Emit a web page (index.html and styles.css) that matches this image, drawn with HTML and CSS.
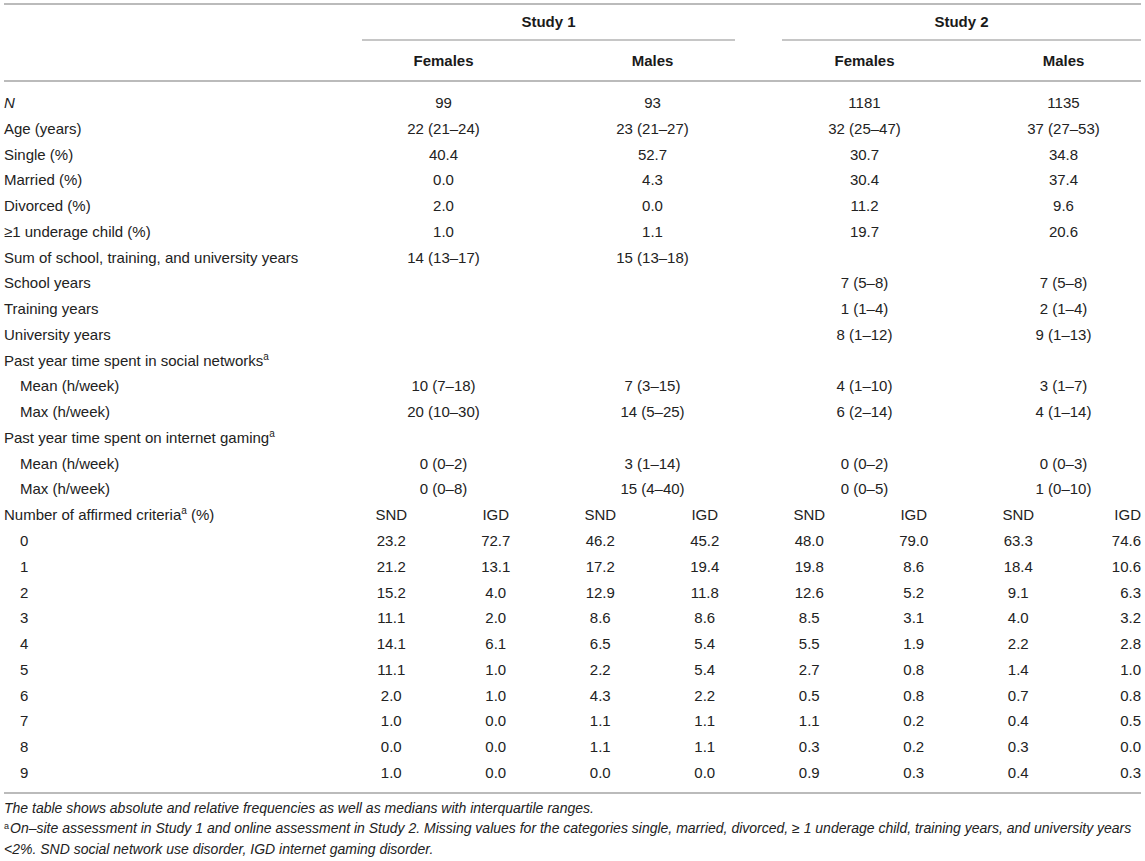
FILE: index.html
```html
<!DOCTYPE html>
<html lang="en">
<head>
<meta charset="utf-8">
<title>Sample characteristics</title>
<link rel="stylesheet" href="styles.css">
</head>
<body>
<div class="wrap">
<table class="stats">
  <colgroup>
    <col class="c-label">
    <col class="c-sub"><col class="c-sub"><col class="c-sub"><col class="c-sub">
    <col class="c-sub"><col class="c-sub"><col class="c-sub"><col class="c-last">
  </colgroup>
  <thead>
    <tr class="h-study">
      <th></th>
      <th colspan="4"><div class="study s1">Study 1</div></th>
      <th colspan="4"><div class="study s2">Study 2</div></th>
    </tr>
    <tr class="h-sex">
      <th></th>
      <th colspan="2">Females</th>
      <th colspan="2">Males</th>
      <th colspan="2" class="p3">Females</th>
      <th colspan="2" class="p4">Males</th>
    </tr>
  </thead>
  <tbody>
    <tr class="first"><td class="lbl"><i>N</i></td><td colspan="2">99</td><td colspan="2">93</td><td colspan="2" class="p3">1181</td><td colspan="2" class="p4">1135</td></tr>
    <tr><td class="lbl">Age (years)</td><td colspan="2">22 (21–24)</td><td colspan="2">23 (21–27)</td><td colspan="2" class="p3">32 (25–47)</td><td colspan="2" class="p4">37 (27–53)</td></tr>
    <tr><td class="lbl">Single (%)</td><td colspan="2">40.4</td><td colspan="2">52.7</td><td colspan="2" class="p3">30.7</td><td colspan="2" class="p4">34.8</td></tr>
    <tr><td class="lbl">Married (%)</td><td colspan="2">0.0</td><td colspan="2">4.3</td><td colspan="2" class="p3">30.4</td><td colspan="2" class="p4">37.4</td></tr>
    <tr><td class="lbl">Divorced (%)</td><td colspan="2">2.0</td><td colspan="2">0.0</td><td colspan="2" class="p3">11.2</td><td colspan="2" class="p4">9.6</td></tr>
    <tr><td class="lbl">≥1 underage child (%)</td><td colspan="2">1.0</td><td colspan="2">1.1</td><td colspan="2" class="p3">19.7</td><td colspan="2" class="p4">20.6</td></tr>
    <tr><td class="lbl">Sum of school, training, and university years</td><td colspan="2">14 (13–17)</td><td colspan="2">15 (13–18)</td><td colspan="2" class="p3"></td><td colspan="2" class="p4"></td></tr>
    <tr><td class="lbl">School years</td><td colspan="2"></td><td colspan="2"></td><td colspan="2" class="p3">7 (5–8)</td><td colspan="2" class="p4">7 (5–8)</td></tr>
    <tr><td class="lbl">Training years</td><td colspan="2"></td><td colspan="2"></td><td colspan="2" class="p3">1 (1–4)</td><td colspan="2" class="p4">2 (1–4)</td></tr>
    <tr><td class="lbl">University years</td><td colspan="2"></td><td colspan="2"></td><td colspan="2" class="p3">8 (1–12)</td><td colspan="2" class="p4">9 (1–13)</td></tr>
    <tr><td class="lbl" colspan="9">Past year time spent in social networks<sup>a</sup></td></tr>
    <tr><td class="lbl ind">Mean (h/week)</td><td colspan="2">10 (7–18)</td><td colspan="2">7 (3–15)</td><td colspan="2" class="p3">4 (1–10)</td><td colspan="2" class="p4">3 (1–7)</td></tr>
    <tr><td class="lbl ind">Max (h/week)</td><td colspan="2">20 (10–30)</td><td colspan="2">14 (5–25)</td><td colspan="2" class="p3">6 (2–14)</td><td colspan="2" class="p4">4 (1–14)</td></tr>
    <tr><td class="lbl" colspan="9">Past year time spent on internet gaming<sup>a</sup></td></tr>
    <tr><td class="lbl ind">Mean (h/week)</td><td colspan="2">0 (0–2)</td><td colspan="2">3 (1–14)</td><td colspan="2" class="p3">0 (0–2)</td><td colspan="2" class="p4">0 (0–3)</td></tr>
    <tr><td class="lbl ind">Max (h/week)</td><td colspan="2">0 (0–8)</td><td colspan="2">15 (4–40)</td><td colspan="2" class="p3">0 (0–5)</td><td colspan="2" class="p4">1 (0–10)</td></tr>
    <tr><td class="lbl">Number of affirmed criteria<sup>a</sup> (%)</td><td>SND</td><td>IGD</td><td>SND</td><td>IGD</td><td>SND</td><td>IGD</td><td>SND</td><td class="r">IGD</td></tr>
    <tr><td class="lbl ind">0</td><td>23.2</td><td>72.7</td><td>46.2</td><td>45.2</td><td>48.0</td><td>79.0</td><td>63.3</td><td class="r">74.6</td></tr>
    <tr><td class="lbl ind">1</td><td>21.2</td><td>13.1</td><td>17.2</td><td>19.4</td><td>19.8</td><td>8.6</td><td>18.4</td><td class="r">10.6</td></tr>
    <tr><td class="lbl ind">2</td><td>15.2</td><td>4.0</td><td>12.9</td><td>11.8</td><td>12.6</td><td>5.2</td><td>9.1</td><td class="r">6.3</td></tr>
    <tr><td class="lbl ind">3</td><td>11.1</td><td>2.0</td><td>8.6</td><td>8.6</td><td>8.5</td><td>3.1</td><td>4.0</td><td class="r">3.2</td></tr>
    <tr><td class="lbl ind">4</td><td>14.1</td><td>6.1</td><td>6.5</td><td>5.4</td><td>5.5</td><td>1.9</td><td>2.2</td><td class="r">2.8</td></tr>
    <tr><td class="lbl ind">5</td><td>11.1</td><td>1.0</td><td>2.2</td><td>5.4</td><td>2.7</td><td>0.8</td><td>1.4</td><td class="r">1.0</td></tr>
    <tr><td class="lbl ind">6</td><td>2.0</td><td>1.0</td><td>4.3</td><td>2.2</td><td>0.5</td><td>0.8</td><td>0.7</td><td class="r">0.8</td></tr>
    <tr><td class="lbl ind">7</td><td>1.0</td><td>0.0</td><td>1.1</td><td>1.1</td><td>1.1</td><td>0.2</td><td>0.4</td><td class="r">0.5</td></tr>
    <tr><td class="lbl ind">8</td><td>0.0</td><td>0.0</td><td>1.1</td><td>1.1</td><td>0.3</td><td>0.2</td><td>0.3</td><td class="r">0.0</td></tr>
    <tr class="last"><td class="lbl ind">9</td><td>1.0</td><td>0.0</td><td>0.0</td><td>0.0</td><td>0.9</td><td>0.3</td><td>0.4</td><td class="r">0.3</td></tr>
  </tbody>
</table>
<div class="notes">
  <p>The table shows absolute and relative frequencies as well as medians with interquartile ranges.</p>
  <p><sup>a</sup>On–site assessment in Study 1 and online assessment in Study 2. Missing values for the categories single, married, divorced, ≥ 1 underage child, training years, and university years &lt;2%. SND social network use disorder, IGD internet gaming disorder.</p>
</div>
</div>
</body>
</html>
```

FILE: styles.css
```css
html, body {
  margin: 0;
  padding: 0;
  background: #ffffff;
}

body {
  font-family: "Liberation Sans", Arial, Helvetica, sans-serif;
  color: #222222;
}

.wrap {
  padding: 3px 4px 0 4px;
}

.stats {
  width: 1137px;
  border-collapse: collapse;
  table-layout: fixed;
  font-size: 15px;
  border-top: 2px solid #bbbbbb;
}

.c-label { width: 335px; }
.c-sub { width: 104.5px; }
.c-last { width: 70.5px; }

.stats th {
  font-weight: bold;
  color: #1a1a1a;
  text-align: center;
  padding: 0;
}

.h-study th {
  height: 36px;
  vertical-align: top;
}

.study {
  height: 34px;
  line-height: 34px;
  border-bottom: 2px solid #c6c6c6;
}

.s1 { margin: 0 22px 0 23px; }
.s2 { margin: 0 0 0 25px; }

.h-sex th {
  height: 39px;
  line-height: 39px;
  border-bottom: 2px solid #bbbbbb;
}

.stats td {
  padding: 0;
  line-height: 25.77px;
  text-align: center;
  white-space: nowrap;
}

.stats td.lbl {
  text-align: left;
}

.stats td.ind {
  padding-left: 16px;
}

.stats td.r {
  text-align: right;
}

.stats .p3 {
  padding-left: 6px;
}

.stats .p4 {
  padding-left: 20px;
}

.stats tr.first td {
  padding-top: 8px;
}

.stats tr.last td {
  padding-bottom: 6px;
  border-bottom: 2px solid #bbbbbb;
}

sup {
  font-size: 10px;
  line-height: 0;
  vertical-align: 6px;
}

.notes {
  width: 1140px;
  margin-top: 4px;
  font-size: 14px;
  font-style: italic;
  line-height: 20.5px;
  color: #222222;
}

.notes p {
  margin: 0;
}

.notes sup {
  font-size: 9px;
  font-style: normal;
  vertical-align: 4px;
  margin-right: 1px;
}
```
